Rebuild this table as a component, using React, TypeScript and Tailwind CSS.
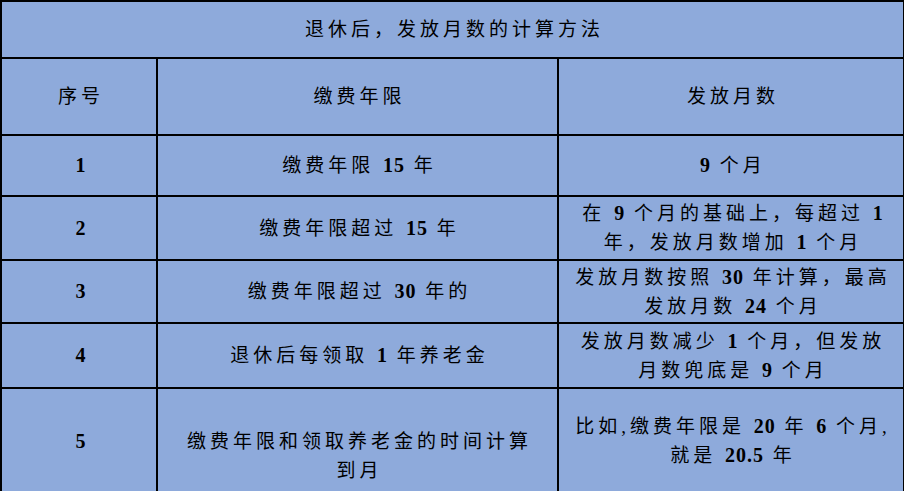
import * as React from 'react';

type Row = {
  no: string;
  term: string[];
  months: string[];
  h: string;
  termAlign?: string;
};

const rows: Row[] = [
  { no: '1', term: ['缴费年限 15 年'], months: ['9 个月'], h: 'h-[61px]' },
  {
    no: '2',
    term: ['缴费年限超过 15 年'],
    months: ['在 9 个月的基础上，每超过 1', '年，发放月数增加 1 个月'],
    h: 'h-[64px]'
  },
  {
    no: '3',
    term: ['缴费年限超过 30 年的'],
    months: ['发放月数按照 30 年计算，最高', '发放月数 24 个月'],
    h: 'h-[63px]'
  },
  {
    no: '4',
    term: ['退休后每领取 1 年养老金'],
    months: ['发放月数减少 1 个月，但发放', '月数兜底是 9 个月'],
    h: 'h-[65px]'
  },
  {
    no: '5',
    term: ['缴费年限和领取养老金的时间计算', '到月'],
    months: ['比如,缴费年限是 20 年 6 个月,', '就是 20.5 年'],
    h: 'h-[106px]',
    termAlign: 'align-bottom pb-[8px]'
  }
];

// digits in the sheet render heavier than the CJK glyphs
const Text: React.FC<{ lines: string[] }> = ({ lines }) => (
  <>
    {lines.map((line, i) => (
      <div key={i}>
        {line.split(/(\d+(?:\.\d+)?)/).map((part, j) =>
          /^\d/.test(part) ? (
            <span key={j} className="font-bold text-[20px] tracking-[1px]">
              {part}
            </span>
          ) : (
            <React.Fragment key={j}>{part}</React.Fragment>
          )
        )}
      </div>
    ))}
  </>
);

const cell =
  'border-2 border-black text-center whitespace-nowrap leading-[29px] tracking-[4px] indent-[4px]';

export default function App() {
  return (
    <div
      className="w-[904px] h-[491px] overflow-hidden bg-white text-[19px] text-black"
      style={{ fontFamily: '"Liberation Serif", "Noto Sans CJK SC", serif' }}
    >
      <table className="w-[903px] table-fixed border-collapse bg-[#8eaadb]">
        <colgroup>
          <col className="w-[156px]" />
          <col className="w-[401px]" />
          <col className="w-[346px]" />
        </colgroup>
        <tbody>
          <tr className="h-[57px]">
            <td colSpan={3} className={cell}>
              退休后，发放月数的计算方法
            </td>
          </tr>
          <tr className="h-[77px]">
            <td className={cell}>序号</td>
            <td className={cell}>缴费年限</td>
            <td className={cell}>发放月数</td>
          </tr>
          {rows.map((r) => (
            <tr key={r.no} className={r.h}>
              <td className={cell}>
                <Text lines={[r.no]} />
              </td>
              <td className={`${cell} ${r.termAlign ?? ''}`}>
                <Text lines={r.term} />
              </td>
              <td className={cell}>
                <Text lines={r.months} />
              </td>
            </tr>
          ))}
        </tbody>
      </table>
    </div>
  );
}
